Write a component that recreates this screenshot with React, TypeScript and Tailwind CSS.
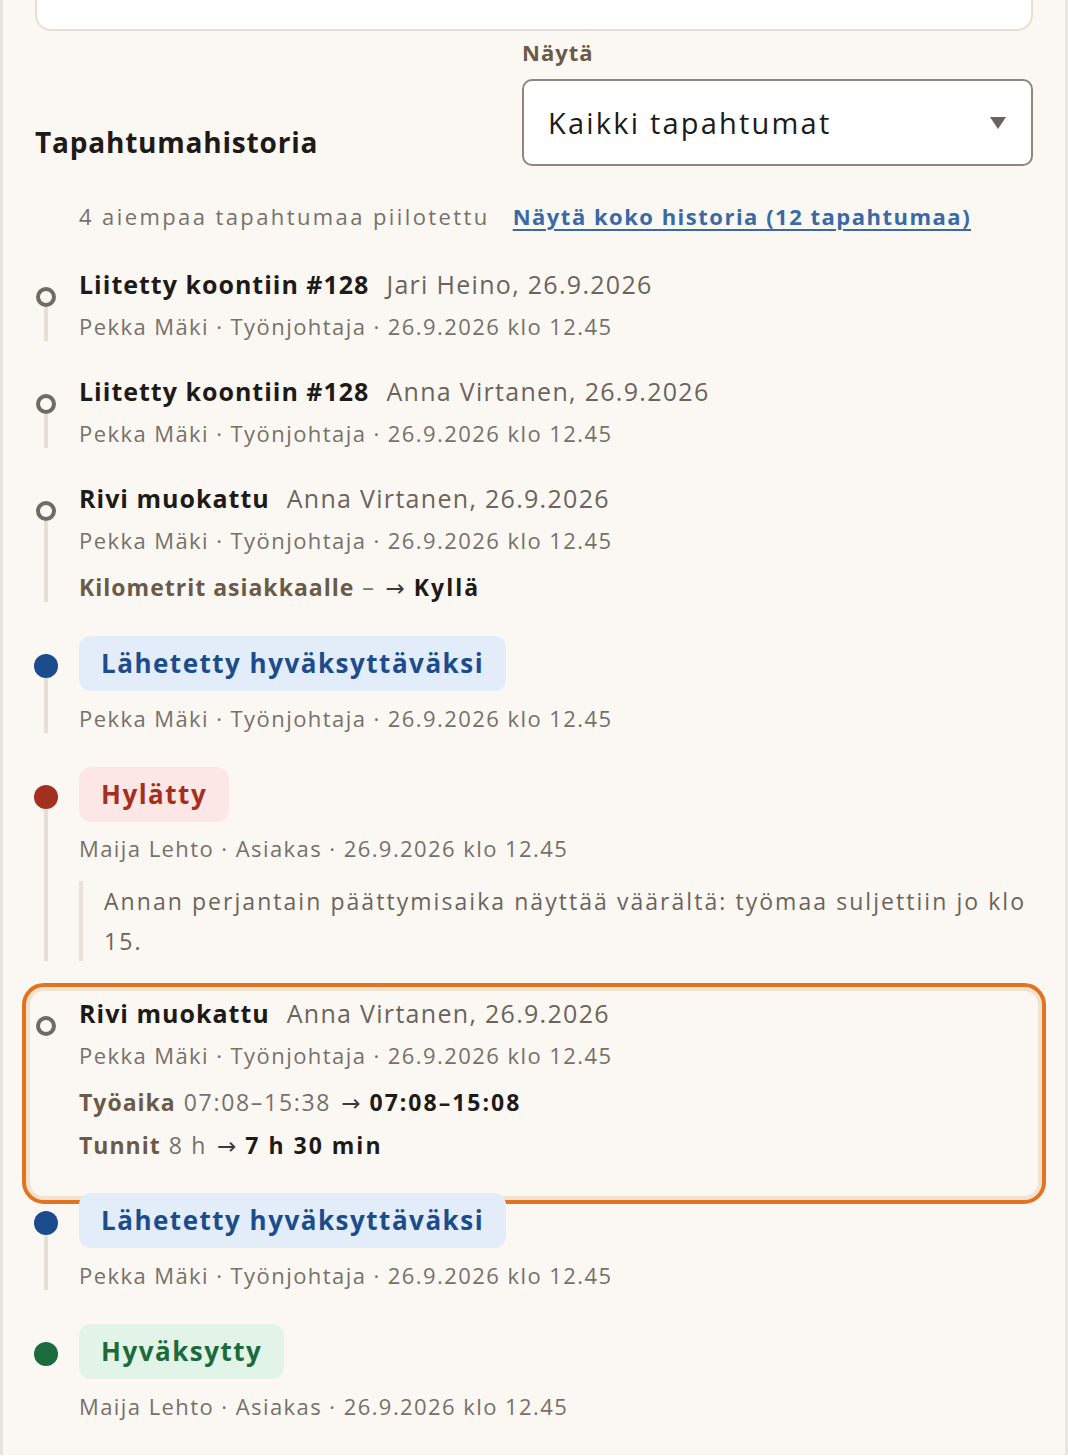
import React from "react";

type Tone = "blue" | "red" | "green";

type Entry = {
  kind: "edit" | "status";
  title: string;
  by?: string;
  tone?: Tone;
  meta: string;
  changes?: { label: string; from: string; to: string }[];
  comment?: string;
  highlight?: boolean;
  last?: boolean;
};

const entries: Entry[] = [
  { kind: "edit", title: "Liitetty koontiin #128", by: "Jari Heino, 26.9.2026", meta: "Pekka Mäki · Työnjohtaja · 26.9.2026 klo 12.45" },
  { kind: "edit", title: "Liitetty koontiin #128", by: "Anna Virtanen, 26.9.2026", meta: "Pekka Mäki · Työnjohtaja · 26.9.2026 klo 12.45" },
  {
    kind: "edit",
    title: "Rivi muokattu",
    by: "Anna Virtanen, 26.9.2026",
    meta: "Pekka Mäki · Työnjohtaja · 26.9.2026 klo 12.45",
    changes: [{ label: "Kilometrit asiakkaalle", from: "–", to: "Kyllä" }],
  },
  { kind: "status", title: "Lähetetty hyväksyttäväksi", tone: "blue", meta: "Pekka Mäki · Työnjohtaja · 26.9.2026 klo 12.45" },
  {
    kind: "status",
    title: "Hylätty",
    tone: "red",
    meta: "Maija Lehto · Asiakas · 26.9.2026 klo 12.45",
    comment: "Annan perjantain päättymisaika näyttää väärältä: työmaa suljettiin jo klo 15.",
  },
  {
    kind: "edit",
    title: "Rivi muokattu",
    by: "Anna Virtanen, 26.9.2026",
    meta: "Pekka Mäki · Työnjohtaja · 26.9.2026 klo 12.45",
    changes: [
      { label: "Työaika", from: "07:08–15:38", to: "07:08–15:08" },
      { label: "Tunnit", from: "8 h", to: "7 h 30 min" },
    ],
    highlight: true,
  },
  { kind: "status", title: "Lähetetty hyväksyttäväksi", tone: "blue", meta: "Pekka Mäki · Työnjohtaja · 26.9.2026 klo 12.45" },
  { kind: "status", title: "Hyväksytty", tone: "green", meta: "Maija Lehto · Asiakas · 26.9.2026 klo 12.45", last: true },
];

const badgeTone: Record<Tone, string> = {
  blue: "bg-[#e2edf9] text-[#1c4c8c]",
  red: "bg-[#fde7e6] text-[#a3301f]",
  green: "bg-[#e2f3e8] text-[#1c6b3c]",
};

const dotTone: Record<Tone, string> = {
  blue: "bg-[#1c4c8c]",
  red: "bg-[#a3301f]",
  green: "bg-[#1c6b3c]",
};

const arrowFont = { fontFamily: '"DejaVu Sans", sans-serif' };

function TimelineItem({ entry }: { entry: Entry }) {
  const isStatus = entry.kind === "status";
  const showLine = !entry.last && !entry.highlight;
  const pad = entry.highlight ? "pb-[33px]" : entry.comment ? "pb-[36px]" : "pb-[34px]";
  const metaGap = isStatus && !entry.comment ? "mt-[12px]" : "mt-[11px]";

  return (
    <li className={`relative flex ${pad}`}>
      {entry.highlight && (
        <div className="pointer-events-none absolute -left-[13px] -right-[13px] -top-[14px] -bottom-[11px] rounded-[22px] border-4 border-[#e2731f] shadow-[inset_0_0_0_4px_#f4e2d1]" />
      )}

      {/* dot + line */}
      <div className="flex w-[44px] shrink-0 flex-col items-start">
        {isStatus ? (
          <div className={`ml-[-1px] mt-[18px] h-6 w-6 rounded-full ${dotTone[entry.tone!]}`} />
        ) : (
          <div className="ml-[1px] mt-[19px] h-5 w-5 rounded-full border-4 border-[#6f6a63] bg-[#fbf8f3]" />
        )}
        {showLine && <div className="ml-[9px] w-1 flex-1 bg-[#e6dfd4]" />}
      </div>

      <div className="min-w-0 flex-1">
        {isStatus ? (
          <div className="flex">
            <span
              className={`relative z-10 rounded-[12px] px-[22px] py-[10px] text-[26px] font-bold leading-[35px] tracking-[1.5px] ${badgeTone[entry.tone!]}`}
            >
              {entry.title}
            </span>
          </div>
        ) : (
          <div className="text-[25px] leading-[32px]">
            <span className="font-bold tracking-[1px] text-[#1e1a17]">{entry.title}</span>
            <span className="ml-[17px] tracking-[1.3px] text-[#6b645c]">{entry.by}</span>
          </div>
        )}

        <div className={`${metaGap} text-[22px] leading-[30px] tracking-[1.43px] text-[#77706a]`}>{entry.meta}</div>

        {entry.changes && (
          <div className="mt-[17px] flex flex-col gap-[13px]">
            {entry.changes.map((c) => (
              <div key={c.label} className="flex items-baseline text-[23px] leading-[30px]">
                <span className="font-bold tracking-[1px] text-[#6b5a48]">{c.label}</span>
                <span className="ml-[8px] tracking-[1.7px] text-[#77706a]">{c.from}</span>
                <span className="ml-[10px] mr-[9px] text-[23px] leading-none text-[#3f3a35]" style={arrowFont}>
                  →
                </span>
                <span className="font-bold tracking-[2px] text-[#1e1a17]">{c.to}</span>
              </div>
            ))}
          </div>
        )}

        {entry.comment && (
          <blockquote className="mt-[18px] border-l-4 border-[#e8e1d6] pl-[21px] text-[23px] leading-[40px] tracking-[2.05px] text-[#6b645c]">
            {entry.comment}
          </blockquote>
        )}
      </div>
    </li>
  );
}

export default function App() {
  return (
    <div
      className="min-h-screen border-x-[3px] border-[#e6e4e1] bg-[#fbf8f3]"
      style={{ fontFamily: '"Open Sans", "Noto Sans", sans-serif' }}
    >
      <div className="px-[32px]">
        {/* bottom of previous card */}
        <div className="-mt-4 h-[47px] rounded-b-[16px] border-2 border-t-0 border-[#e8dfd4] bg-white" />

        {/* header row */}
        <div className="mt-[4px] flex items-end justify-between">
          <h2 className="mb-[6px] text-[28px] font-bold leading-[36px] tracking-[0.8px] text-[#1e1a17]">
            Tapahtumahistoria
          </h2>
          <div className="w-[511px]">
            <div className="mt-[2px] text-[22px] font-bold leading-[30px] tracking-[1px] text-[#6b5a48]">Näytä</div>
            <div className="mt-[12px] flex h-[87px] items-center justify-between rounded-[10px] border-2 border-[#8f877c] bg-white pl-[24px] pr-[24px]">
              <span className="text-[29px] tracking-[2.2px] text-[#1e1a17]">Kaikki tapahtumat</span>
              <svg width="16" height="12" viewBox="0 0 16 12" className="mr-[1px]">
                <path d="M0 0 L16 0 L8 12 Z" fill="#666360" />
              </svg>
            </div>
          </div>
        </div>

        {/* hidden notice */}
        <div className="mt-[35px] flex items-center gap-[23px] pl-[44px] text-[22px] leading-[30px]">
          <span className="tracking-[2.4px] text-[#77706a]">4 aiempaa tapahtumaa piilotettu</span>
          <a href="#" className="font-bold tracking-[1.5px] text-[#3a6aa6] underline decoration-2 underline-offset-4">
            Näytä koko historia (12 tapahtumaa)
          </a>
        </div>

        <ol className="mt-[37px]">
          {entries.map((e, i) => (
            <TimelineItem key={i} entry={e} />
          ))}
        </ol>
      </div>
    </div>
  );
}
